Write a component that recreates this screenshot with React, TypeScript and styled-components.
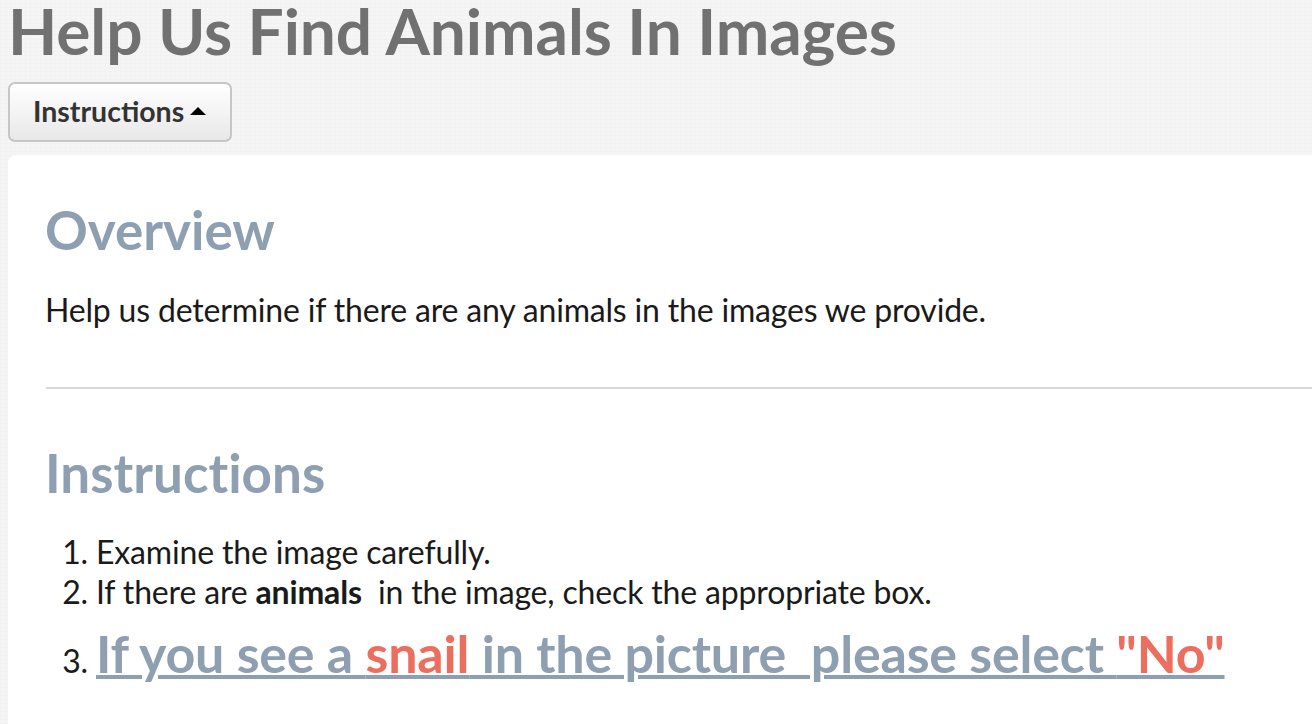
import React from 'react';
import styled, { createGlobalStyle } from 'styled-components';

const GlobalStyle = createGlobalStyle`
  html, body {
    margin: 0;
    padding: 0;
    height: 724px;
    overflow: hidden;
    background-color: #f5f5f5;
    background-image:
      repeating-linear-gradient(0deg, rgba(0, 0, 0, 0.01) 0 1px, transparent 1px 4px),
      repeating-linear-gradient(90deg, rgba(0, 0, 0, 0.008) 0 1px, transparent 1px 5px);
    font-family: Lato, "Liberation Sans", sans-serif;
    font-variant-ligatures: none;
  }
`;

const Page = styled.div`
  width: 1312px;
  height: 724px;
  padding-left: 8px;
  box-sizing: border-box;
  overflow: hidden;
`;

const Title = styled.h1`
  margin: 0;
  height: 62px;
  font-size: 64px;
  line-height: 62px;
  font-weight: 700;
  color: #717171;
  letter-spacing: -0.07px;
  white-space: nowrap;
`;

const ToggleButton = styled.button`
  display: flex;
  align-items: center;
  gap: 6px;
  margin-top: 20px;
  width: 224px;
  height: 60px;
  padding: 0 0 3px 23px;
  box-sizing: border-box;
  border: 2px solid #c6c6c6;
  border-radius: 7px;
  background: linear-gradient(#ffffff, #e8e8e8);
  font-family: inherit;
  font-size: 28.5px;
  font-weight: 700;
  color: #333;
`;

const Caret = styled.span`
  width: 0;
  height: 0;
  border-left: 8px solid transparent;
  border-right: 8px solid transparent;
  border-bottom: 8px solid #000;
`;

const Card = styled.section`
  margin-top: 13px;
  width: 1320px;
  height: 600px;
  padding: 37px 0 0 37px;
  box-sizing: border-box;
  background: #fff;
  border-radius: 8px;
`;

const Heading = styled.h2`
  margin: 0;
  height: 76px;
  font-size: 53px;
  line-height: 76px;
  font-weight: 700;
  color: #8e9fb2;
`;

const Paragraph = styled.p`
  margin: 22px 0 0;
  font-size: 32px;
  line-height: 40px;
  color: #1a1a1a;
  letter-spacing: -0.18px;
`;

const Divider = styled.hr`
  margin: 57px 0 46px 1px;
  border: 0;
  border-top: 2px solid #d8d8d8;
`;

const Steps = styled.ol`
  margin: 21px 0 0;
  padding: 0 0 0 51px;
  list-style: none;
  counter-reset: step;
  font-size: 32px;
  line-height: 40px;
  color: #1a1a1a;
  letter-spacing: -0.16px;
`;

const Step = styled.li`
  counter-increment: step;

  &::before {
    content: counter(step) ".";
    display: inline-block;
    width: 32px;
    margin: 0 8px 0 -40px;
    text-align: right;
  }
`;

const Callout = styled.span`
  font-size: 52px;
  line-height: 82px;
  font-weight: 700;
  color: #8e9fb2;
  letter-spacing: -0.2px;
  text-decoration: underline;
  text-decoration-thickness: 4px;
`;

const Alert = styled.span`
  color: #ec6e5f;
`;

export default function App(): JSX.Element {
  return (
    <Page>
      <GlobalStyle />
      <Title>Help Us Find Animals In Images</Title>
      <ToggleButton>
        Instructions
        <Caret />
      </ToggleButton>
      <Card>
        <Heading>Overview</Heading>
        <Paragraph>Help us determine if there are any animals in the images we provide.</Paragraph>
        <Divider />
        <Heading>Instructions</Heading>
        <Steps>
          <Step>Examine the image carefully.</Step>
          <Step>
            If there are <b>animals</b>&nbsp; in the image, check the appropriate box.
          </Step>
          <Step>
            <Callout>
              If you see a <Alert>snail</Alert> in the picture&nbsp; please select <Alert>"No"</Alert>
            </Callout>
          </Step>
        </Steps>
      </Card>
    </Page>
  );
}
